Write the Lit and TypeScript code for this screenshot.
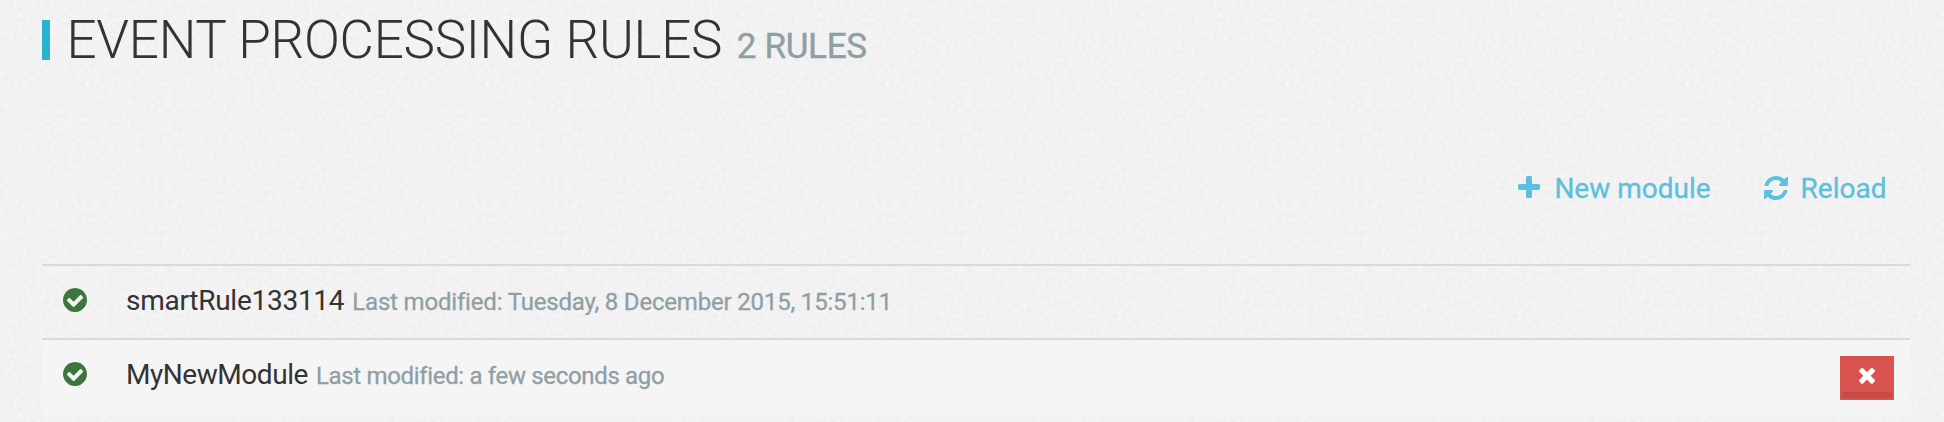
import { LitElement, html, css, svg } from "lit";

const ICONS = {
  plus: "M1600 736v192q0 40-28 68t-68 28h-416v416q0 40-28 68t-68 28h-192q-40 0-68-28t-28-68v-416h-416q-40 0-68-28t-28-68v-192q0-40 28-68t68-28h416v-416q0-40 28-68t68-28h192q40 0 68 28t28 68v416h416q40 0 68 28t28 68z",
  refresh: "M1639 1056q0 5-1 7-64 268-268 434.5t-478 166.5q-146 0-282.5-55t-243.5-157l-129 129q-19 19-45 19t-45-19-19-45v-448q0-26 19-45t45-19h448q26 0 45 19t19 45-19 45l-137 137q71 66 161 102t187 36q134 0 250-65t186-179q11-17 53-117 8-23 30-23h192q13 0 22.5 9.5t9.5 22.5zm25-800v448q0 26-19 45t-45 19h-448q-26 0-45-19t-19-45 19-45l138-138q-148-137-349-137-134 0-250 65t-186 179q-11 17-53 117-8 23-30 23h-199q-13 0-22.5-9.5t-9.5-22.5v-7q65-268 270-434.5t480-166.5q146 0 284 55.5t245 156.5l130-129q19-19 45-19t45 19 19 45z",
  check: "M1412 734q0-28-18-46l-91-90q-19-19-45-19t-45 19l-408 407-226-226q-19-19-45-19t-45 19l-91 90q-18 18-18 46 0 27 18 45l362 362q19 19 45 19 27 0 46-19l543-543q18-18 18-45zm252 162q0 209-103 385.5t-279.5 279.5-385.5 103-385.5-103-279.5-279.5-103-385.5 103-385.5 279.5-279.5 385.5-103 385.5 103 279.5 279.5 103 385.5z",
  times: "M1490 1322q0 40-28 68l-136 136q-28 28-68 28t-68-28l-294-294-294 294q-28 28-68 28t-68-28l-136-136q-28-28-28-68t28-68l294-294-294-294q-28-28-28-68t28-68l136-136q28-28 68-28t68 28l294 294 294-294q28-28 68-28t68 28l136 136q28 28 28 68t-28 68l-294 294 294 294q28 28 28 68z",
};

const icon = (name: keyof typeof ICONS) => html`
  <svg class="icon ${name}" viewBox="0 0 1792 1792" aria-hidden="true">${svg`<path d=${ICONS[name]} />`}</svg>`;

class RuleRow extends LitElement {
  static properties = {
    name: {},
    modified: {},
    active: { type: Boolean, reflect: true },
  };
  declare name: string;
  declare modified: string;
  declare active: boolean;

  static styles = css`
    :host {
      display: flex;
      align-items: flex-start;
      box-sizing: border-box;
      height: 74px;
      padding: 16px 16px 0 19.5px;
      border-top: 2px solid #dadada;
      color: #333;
    }
    :host([active]) { height: 78px; background: #f5f5f5; }
    .icon { display: block; flex: none; width: 28px; height: 28px; fill: currentColor; }
    .check { margin: 4px 37px 0 -0.5px; color: #3c763d; }
    .text { display: flex; flex: 1; align-items: baseline; margin-top: 2px; line-height: 33px; white-space: pre; }
    .name { font-size: 28px; letter-spacing: -0.27px; margin-right: 8px; }
    :host([active]) .name { letter-spacing: -0.45px; margin-right: 8px; }
    .modified { font-size: 24px; letter-spacing: -0.18px; color: #8f9fa3; -webkit-text-stroke: 0.3px currentColor; }
    :host([active]) .modified { letter-spacing: -0.33px; }
    .remove {
      display: grid;
      grid-template-rows: 1fr 6px;
      justify-items: center;
      box-sizing: border-box;
      width: 54px;
      height: 44px;
      padding: 7px 2px 2px;
      border: 0;
      border-radius: 0;
      background: #d9534f;
      color: #fff;
    }
    .times { width: 24px; height: 24px; }
    .edge { width: 100%; height: 6px; background: #c64b47; }
  `;

  render() {
    return html`
      ${icon("check")}
      <div class="text"><span class="name">${this.name}</span><span class="modified">Last modified: ${this.modified}</span></div>
      ${this.active ? html`<button class="remove" aria-label="Remove">${icon("times")}<span class="edge"></span></button>` : ""}
    `;
  }
}
customElements.define("rule-row", RuleRow);

class AppRoot extends LitElement {
  static styles = css`
    :host {
      display: block;
      box-sizing: border-box;
      height: 422px;
      padding: 9px 34px 0 42px;
      overflow: hidden;
      font-family: Roboto, sans-serif;
      background: #f1f1f1 url("data:image/svg+xml,%3Csvg xmlns='http://www.w3.org/2000/svg' width='400' height='400'%3E%3Cfilter id='n' x='0' y='0' width='100%25' height='100%25' color-interpolation-filters='sRGB'%3E%3CfeTurbulence type='fractalNoise' baseFrequency='.22' numOctaves='2' seed='4' stitchTiles='stitch'/%3E%3CfeColorMatrix values='.045 0 0 0 .926 .045 0 0 0 .926 .045 0 0 0 .926 0 0 0 0 1'/%3E%3C/filter%3E%3Crect width='400' height='400' filter='url(%23n)'/%3E%3C/svg%3E");
    }
    header { display: flex; align-items: baseline; height: 62px; }
    .bar { align-self: flex-start; width: 8px; height: 40px; margin: 11px 16.5px 0 0; background: #29b3cf; }
    h1 { margin: 0; font-size: 53px; font-weight: 300; line-height: 62px; letter-spacing: -0.29px; color: #333; white-space: nowrap; }
    .count { margin-left: 14.5px; font-size: 35px; letter-spacing: -0.3px; color: #8f9fa3; white-space: nowrap; -webkit-text-stroke: 0.4px currentColor; }
    nav { display: flex; justify-content: flex-end; gap: 51px; height: 33px; margin: 101px 23.5px 59px 0; }
    .action { display: flex; gap: 11px; font-size: 28px; line-height: 33px; color: #5bc0de; white-space: nowrap; }
    .action span { -webkit-text-stroke: 0.3px currentColor; }
    .action .icon { width: 28px; height: 28px; margin-top: 2px; fill: currentColor; }
  `;

  private rules = [
    { name: "smartRule133114", modified: "Tuesday, 8 December 2015, 15:51:11", active: false },
    { name: "MyNewModule", modified: "a few seconds ago", active: true },
  ];

  render() {
    return html`
      <header>
        <span class="bar"></span>
        <h1>EVENT PROCESSING RULES</h1>
        <span class="count">${this.rules.length} RULES</span>
      </header>
      <nav>
        <a class="action">${icon("plus")}<span>New module</span></a>
        <a class="action">${icon("refresh")}<span>Reload</span></a>
      </nav>
      <main>
        ${this.rules.map((r) => html`<rule-row .name=${r.name} .modified=${r.modified} .active=${r.active}></rule-row>`)}
      </main>
    `;
  }
}
customElements.define("app-root", AppRoot);
